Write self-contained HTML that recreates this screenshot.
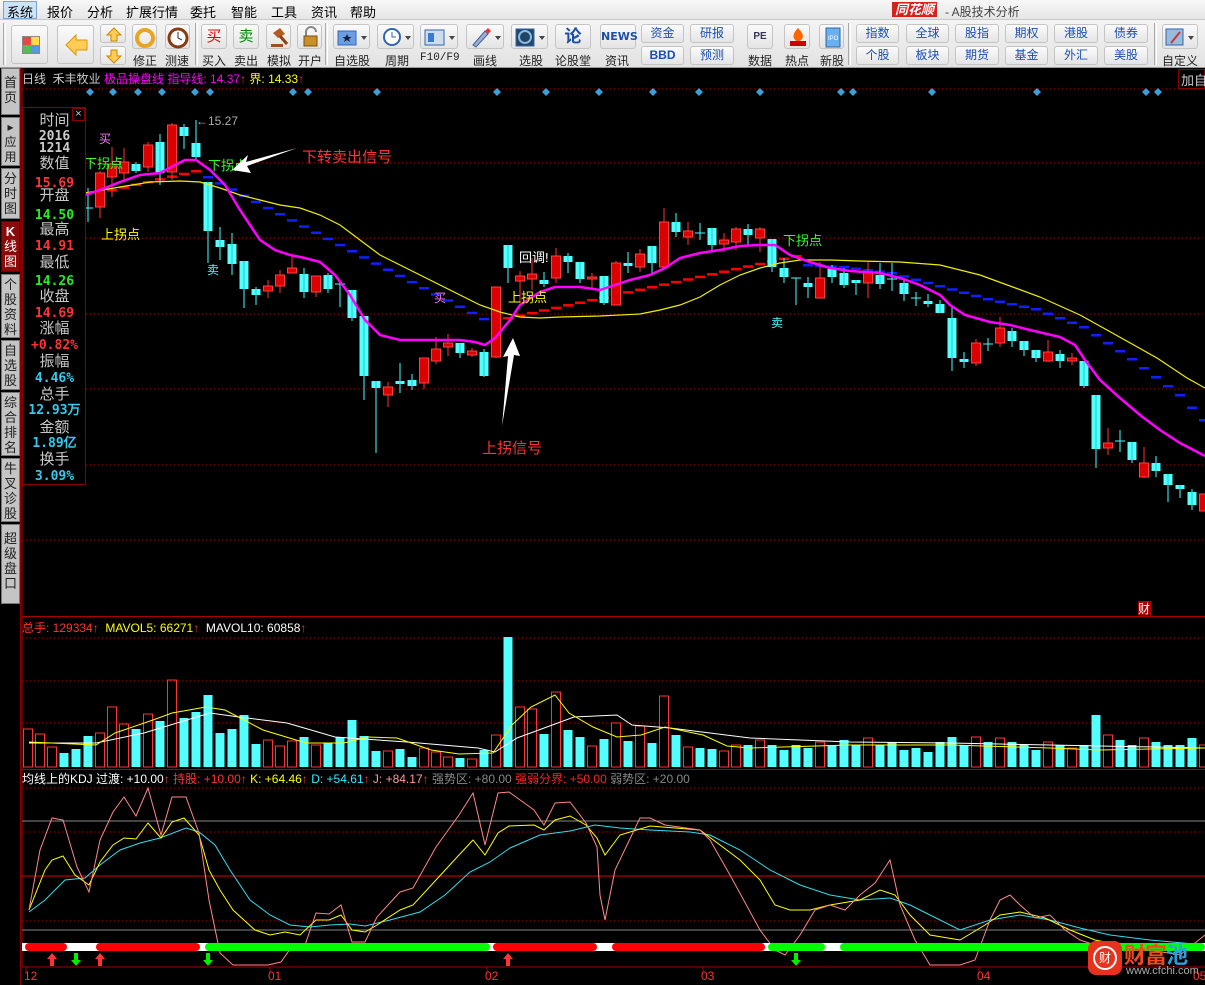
<!DOCTYPE html>
<html><head><meta charset="utf-8">
<style>
*{margin:0;padding:0;box-sizing:border-box}
body{width:1205px;height:985px;overflow:hidden;background:#000;font-family:"Liberation Sans","Noto Sans CJK SC",sans-serif;position:relative}
.a{position:absolute;white-space:nowrap}
#menu{position:absolute;left:0;top:0;width:1205px;height:20px;background:linear-gradient(#f7f7f7,#e6e6e6);border-bottom:1px solid #c8c8c8}
#menu span{position:absolute;top:2px;font-size:13px;color:#000}
#tb{position:absolute;left:0;top:20px;width:1205px;height:48px;background:linear-gradient(#f4f4f4,#e2e2e2);border-bottom:1px solid #999}
.btn{position:absolute;border:1px solid #c4c4c4;border-radius:3px;background:linear-gradient(#fbfbfb,#e4e4e4)}
.lbl{position:absolute;font-size:12px;color:#222;top:32px}
.sb{position:absolute;font-size:12px;color:#1a4fb0;text-align:center;line-height:17px}
.sep{position:absolute;top:3px;width:3px;height:42px;border-left:1px solid #aaa;border-right:1px solid #fff}
#side{position:absolute;left:0;top:68px;width:21px;height:917px;background:#000;border-right:1px solid #800}
.tab{position:absolute;left:1px;width:19px;background:#c4c4c4;border:1px solid #777;color:#222;font-size:13px;line-height:15px;text-align:center;padding-top:2px;overflow:hidden}
.ip{position:absolute;left:0;width:63px;text-align:center;font-size:15px;line-height:16px}
.lb{color:#c8c8c8}
.v{font-weight:bold;font-family:"DejaVu Sans Mono","Liberation Mono",monospace;font-size:13px}
</style></head><body>
<div id="menu">
<span style="left:3px;top:1px;background:#cfe3f7;border:1px solid #7da2ce;padding:0 3px;height:18px">系统</span>
<span style="left:47px">报价</span><span style="left:87px">分析</span><span style="left:126px">扩展行情</span><span style="left:190px">委托</span><span style="left:231px">智能</span><span style="left:271px">工具</span><span style="left:311px">资讯</span><span style="left:350px">帮助</span>
<span style="left:892px;top:2px;color:#fff;background:#d8201c;font-style:italic;font-weight:bold;font-size:13px;padding:0 3px;line-height:15px">同花顺</span>
<span style="left:945px;color:#444;font-size:12px;top:3px">- A股技术分析</span>
</div>
<div id="tb">
<div class="sep" style="left:3px"></div>
<div class="btn" style="left:11px;top:5px;width:37px;height:39px"><div style="position:absolute;left:10px;top:10px;width:18px;height:18px;display:grid;grid-template-columns:1fr 1fr;border:1px solid #888"><i style="background:#e44"></i><i style="background:#fd4"></i><i style="background:#5b5"></i><i style="background:#59d"></i></div></div>
<div class="btn" style="left:57px;top:5px;width:37px;height:39px"><svg width="37" height="39" style="position:absolute;left:0;top:0"><path d="M8 19 L18 9 L18 14 L29 14 L29 24 L18 24 L18 29 Z" fill="#fc5" stroke="#d90"/></svg></div>
<div class="btn" style="left:100px;top:4px;width:26px;height:19px"><svg width="26" height="19"><path d="M13 3 L20 10 L16 10 L16 16 L10 16 L10 10 L6 10Z" fill="#fc5" stroke="#c80"/></svg></div>
<div class="btn" style="left:100px;top:26px;width:26px;height:19px"><svg width="26" height="19"><path d="M13 16 L20 9 L16 9 L16 3 L10 3 L10 9 L6 9Z" fill="#fc5" stroke="#c80"/></svg></div>
<div class="btn" style="left:132px;top:4px;width:25px;height:25px"><svg width="25" height="25"><circle cx="12" cy="13" r="8" fill="none" stroke="#eaa520" stroke-width="4"/></svg></div><div class="lbl" style="left:133px">修正</div>
<div class="btn" style="left:165px;top:4px;width:25px;height:25px"><svg width="25" height="25"><circle cx="12" cy="13" r="9" fill="#fff" stroke="#8a3a10" stroke-width="3"/><path d="M12 7V13L16 15" stroke="#333" fill="none"/></svg></div><div class="lbl" style="left:165px">测速</div>
<div class="sep" style="left:195px"></div>
<div class="btn" style="left:201px;top:4px;width:26px;height:25px;color:#e00;font-size:15px;text-align:center;line-height:23px">买</div><div class="lbl" style="left:202px">买入</div>
<div class="btn" style="left:233px;top:4px;width:26px;height:25px;color:#080;font-size:15px;text-align:center;line-height:23px">卖</div><div class="lbl" style="left:234px">卖出</div>
<div class="btn" style="left:266px;top:4px;width:25px;height:25px"><svg width="25" height="25"><path d="M6 8 L13 3 L18 9 L11 13Z" fill="#b55a20"/><path d="M13 11 L20 19" stroke="#8a4010" stroke-width="3"/><rect x="4" y="19" width="12" height="3" fill="#a05020"/></svg></div><div class="lbl" style="left:267px">模拟</div>
<div class="btn" style="left:297px;top:4px;width:25px;height:25px"><svg width="25" height="25"><path d="M8 11 V7 a5 5 0 0 1 10 0" fill="none" stroke="#888" stroke-width="2"/><rect x="6" y="11" width="13" height="10" fill="#c8902a" stroke="#7a5010"/></svg></div><div class="lbl" style="left:298px">开户</div>
<div class="sep" style="left:325px"></div>
<div class="btn" style="left:333px;top:4px;width:37px;height:25px"><svg width="37" height="25"><rect x="4" y="6" width="18" height="14" fill="#6a9ee0" stroke="#36c"/><path d="M13 9 l1.5 3h3l-2.5 2 1 3-3-2-3 2 1-3-2.5-2h3z" fill="#124"/><path d="M27 11h6l-3 4z" fill="#444"/></svg></div><div class="lbl" style="left:334px">自选股</div>
<div class="btn" style="left:377px;top:4px;width:37px;height:25px"><svg width="37" height="25"><circle cx="14" cy="12" r="8" fill="#fff" stroke="#36a" stroke-width="2"/><path d="M14 7v5h4" stroke="#36a" fill="none"/><path d="M27 11h6l-3 4z" fill="#444"/></svg></div><div class="lbl" style="left:385px">周期</div>
<div class="btn" style="left:420px;top:4px;width:38px;height:25px"><svg width="38" height="25"><rect x="4" y="5" width="19" height="15" fill="#cde" stroke="#36a"/><rect x="7" y="8" width="6" height="9" fill="#3a7ad0"/><path d="M28 11h6l-3 4z" fill="#444"/></svg></div><div class="lbl" style="left:420px;font-family:'Liberation Mono',monospace;font-size:11px">F10/F9</div>
<div class="btn" style="left:466px;top:4px;width:38px;height:25px"><svg width="38" height="25"><path d="M6 20 L18 6 L21 9 L9 22Z" fill="#aac" stroke="#36a"/><path d="M18 6 L21 3 L24 6 L21 9" fill="#e33"/><path d="M28 11h6l-3 4z" fill="#444"/></svg></div><div class="lbl" style="left:473px">画线</div>
<div class="btn" style="left:511px;top:4px;width:37px;height:25px"><svg width="37" height="25"><rect x="4" y="4" width="18" height="17" fill="#246" stroke="#36a"/><circle cx="13" cy="12" r="6" fill="none" stroke="#8bd" stroke-width="2"/><path d="M27 11h6l-3 4z" fill="#444"/></svg></div><div class="lbl" style="left:519px">选股</div>
<div class="btn" style="left:555px;top:4px;width:36px;height:25px;color:#1d4fa8;font-weight:bold;font-size:17px;text-align:center;line-height:23px">论</div><div class="lbl" style="left:555px">论股堂</div>
<div class="btn" style="left:600px;top:4px;width:36px;height:25px;color:#1d4fa8;font-weight:bold;font-size:11px;text-align:center;line-height:23px;font-family:'DejaVu Sans',sans-serif">NEWS</div><div class="lbl" style="left:605px">资讯</div>
<div class="btn sb" style="left:641px;top:4px;width:43px;height:19px">资金</div>
<div class="btn sb" style="left:641px;top:26px;width:43px;height:19px;font-weight:bold">BBD</div>
<div class="btn sb" style="left:690px;top:4px;width:44px;height:19px">研报</div>
<div class="btn sb" style="left:690px;top:26px;width:44px;height:19px">预测</div>
<div class="btn" style="left:747px;top:4px;width:26px;height:25px;color:#335;font-size:10px;font-weight:bold;text-align:center;line-height:23px">PE</div><div class="lbl" style="left:748px">数据</div>
<div class="btn" style="left:784px;top:4px;width:26px;height:25px"><svg width="26" height="25"><path d="M13 3 C20 10 19 14 13 17 C7 14 7 9 13 3Z" fill="#f60"/><rect x="5" y="16" width="16" height="5" fill="#c00"/></svg></div><div class="lbl" style="left:785px">热点</div>
<div class="btn" style="left:819px;top:4px;width:25px;height:25px"><svg width="25" height="25"><rect x="6" y="3" width="14" height="19" fill="#6ab0ee" stroke="#36a"/><text x="8" y="15" font-size="6" fill="#fff" font-family="Liberation Sans">IPO</text></svg></div><div class="lbl" style="left:820px">新股</div>
<div class="sep" style="left:848px"></div>
<div class="btn sb" style="left:856px;top:4px;width:43px;height:19px">指数</div><div class="btn sb" style="left:856px;top:26px;width:43px;height:19px">个股</div>
<div class="btn sb" style="left:906px;top:4px;width:43px;height:19px">全球</div><div class="btn sb" style="left:906px;top:26px;width:43px;height:19px">板块</div>
<div class="btn sb" style="left:955px;top:4px;width:44px;height:19px">股指</div><div class="btn sb" style="left:955px;top:26px;width:44px;height:19px">期货</div>
<div class="btn sb" style="left:1005px;top:4px;width:43px;height:19px">期权</div><div class="btn sb" style="left:1005px;top:26px;width:43px;height:19px">基金</div>
<div class="btn sb" style="left:1054px;top:4px;width:44px;height:19px">港股</div><div class="btn sb" style="left:1054px;top:26px;width:44px;height:19px">外汇</div>
<div class="btn sb" style="left:1104px;top:4px;width:44px;height:19px">债券</div><div class="btn sb" style="left:1104px;top:26px;width:44px;height:19px">美股</div>
<div class="sep" style="left:1154px"></div>
<div class="btn" style="left:1162px;top:4px;width:36px;height:25px"><svg width="36" height="25"><rect x="3" y="4" width="17" height="16" fill="#9bd" stroke="#36a"/><path d="M8 18 L17 7" stroke="#c33" stroke-width="2"/><path d="M25 11h6l-3 4z" fill="#444"/></svg></div><div class="lbl" style="left:1162px">自定义</div>
</div>

<div id="side">
<div class="tab" style="top:0;height:47px;padding-top:6px">首<br>页</div>
<div class="tab" style="top:49px;height:49px;font-size:12px">▸<br>应<br>用</div>
<div class="tab" style="top:100px;height:51px">分<br>时<br>图</div>
<div class="tab" style="top:153px;height:51px;background:#8b0a0a;color:#fff;border-color:#600"><b>K</b><br>线<br>图</div>
<div class="tab" style="top:206px;height:64px">个<br>股<br>资<br>料</div>
<div class="tab" style="top:272px;height:50px">自<br>选<br>股</div>
<div class="tab" style="top:324px;height:64px">综<br>合<br>排<br>名</div>
<div class="tab" style="top:390px;height:64px">牛<br>叉<br>诊<br>股</div>
<div class="tab" style="top:456px;height:80px;padding-top:6px">超<br>级<br>盘<br>口</div>
</div>

<svg id="ch" width="1205" height="985" style="position:absolute;left:0;top:0" font-family="Liberation Sans, Noto Sans CJK SC, sans-serif"></svg>

<div class="a" style="left:22px;top:70px;font-size:12px;color:#ccc">日线 &nbsp;禾丰牧业 <span style="color:#f0f">极品操盘线 指导线</span><span style="color:#f0f">: 14.37</span><span style="color:#f33">↑</span> <span style="color:#ff0">界: 14.33</span><span style="color:#f33">↑</span></div>
<div class="a" style="left:1178px;top:69px;width:27px;height:20px;border:1px solid #800;color:#ccc;font-size:13px;padding-left:2px">加自</div>

<div class="a" style="left:22px;top:107px;width:64px;height:378px;border:1px solid #800;background:#000">
<div style="position:absolute;right:0;top:0;width:13px;height:13px;border:1px solid #800;color:#ccc;font-size:11px;line-height:11px;text-align:center">×</div>
<div class="ip lb" style="top:5px">时间</div>
<div class="ip v" style="top:21px;color:#ccc">2016</div>
<div class="ip v" style="top:33px;color:#ccc">1214</div>
<div class="ip lb" style="top:48px">数值</div>
<div class="ip v" style="top:68px;color:#f33">15.69</div>
<div class="ip lb" style="top:80px">开盘</div>
<div class="ip v" style="top:100px;color:#2e2">14.50</div>
<div class="ip lb" style="top:114px">最高</div>
<div class="ip v" style="top:131px;color:#f33">14.91</div>
<div class="ip lb" style="top:147px">最低</div>
<div class="ip v" style="top:166px;color:#2e2">14.26</div>
<div class="ip lb" style="top:181px">收盘</div>
<div class="ip v" style="top:198px;color:#f33">14.69</div>
<div class="ip lb" style="top:213px">涨幅</div>
<div class="ip v" style="top:230px;color:#f33">+0.82%</div>
<div class="ip lb" style="top:246px">振幅</div>
<div class="ip v" style="top:263px;color:#3ce">4.46%</div>
<div class="ip lb" style="top:279px">总手</div>
<div class="ip v" style="top:295px;color:#3ce">12.93万</div>
<div class="ip lb" style="top:312px">金额</div>
<div class="ip v" style="top:328px;color:#3ce">1.89亿</div>
<div class="ip lb" style="top:344px">换手</div>
<div class="ip v" style="top:361px;color:#3ce">3.09%</div>
</div>

<div class="a" style="left:22px;top:619px;font-size:12px"><span style="color:#f33">总手: 129334↑</span> &nbsp;<span style="color:#ff0">MAVOL5: 66271</span><span style="color:#f33">↑</span> &nbsp;<span style="color:#fff">MAVOL10: 60858</span><span style="color:#f33">↑</span></div>
<div class="a" style="left:22px;top:770px;font-size:12px"><span style="color:#fff">均线上的KDJ 过渡: +10.00</span><span style="color:#f33">↑</span> <span style="color:#f33">持股: +10.00↑</span> <span style="color:#ff0">K: +64.46</span><span style="color:#f33">↑</span> <span style="color:#3ef">D: +54.61</span><span style="color:#f33">↑</span> <span style="color:#f99">J: +84.17</span><span style="color:#f33">↑</span> <span style="color:#888">强势区: +80.00</span> <span style="color:#f22">强弱分界: +50.00</span> <span style="color:#888">弱势区: +20.00</span></div>

<div class="a" style="left:1088px;top:941px;width:34px;height:34px;border-radius:8px;background:#e8321e"><div style="position:absolute;left:5px;top:5px;width:24px;height:24px;border:2px solid #fff;border-radius:50%;color:#fff;font-size:12px;text-align:center;line-height:20px">财</div></div>
<div class="a" style="left:1124px;top:938px;font-size:22px;font-weight:bold;letter-spacing:-1px"><span style="color:#f04a1e">财富</span><span style="color:#2aa0e0">池</span></div>
<div class="a" style="left:1126px;top:965px;font-size:11px;color:#aaa">www.cfchi.com</div>

<script>
const S=document.getElementById('ch');let h='';
function L(x1,y1,x2,y2,c,w,d){h+=`<line x1="${x1}" y1="${y1}" x2="${x2}" y2="${y2}" stroke="${c}" stroke-width="${w||1}"${d?` stroke-dasharray="${d}"`:''}/>`;}
function P(pts,c,w){h+=`<polyline points="${pts.map(p=>p.join(',')).join(' ')}" fill="none" stroke="${c}" stroke-width="${w||1}"/>`;}
function T(x,y,t,c,s){h+=`<text x="${x}" y="${y}" fill="${c}" font-size="${s||13}">${t}</text>`;}
L(22,68,22,967,'#a00');
L(22,616.5,1205,616.5,'#a00');L(22,769.5,1205,769.5,'#a00');
[89,163,238,314,389,465,540].forEach(y=>L(22,y,1205,y,'#a00',1,'1 3'));
[638,681,723].forEach(y=>L(22,y,1205,y,'#a00',1,'1 3'));
[788,832,921].forEach(y=>L(22,y,1205,y,'#a00',1,'1 3'));
L(22,821,1205,821,'#888');L(22,930,1205,930,'#888');L(22,876,1205,876,'#d00');
L(22,967,1205,967,'#a00');
[90,113,138,162,195,210,293,308,377,497,546,599,653,699,760,841,853,932,1037,1146,1158].forEach(x=>h+=`<path d="M${x} 88l4 4-4 4-4-4z" fill="#3aa0d8"/>`);
const C=[[208,208,188,222],[207,173,171,218],[177,164,147,197],[173,162,148,183],[164,171,162,173],[167,145,142,172],[142,173,134,185],[172,125,123,180],[127,136,124,149],[143,157,120,160],[182,231,182,263],[240,247,227,260],[244,264,233,275],[261,289,261,308],[289,295,287,305],[291,286,280,298],[286,275,270,293],[273,268,254,273],[274,292,268,298],[292,276,276,297],[275,289,273,293],[284,284,283,307],[290,318,290,321],[316,376,316,400],[381,388,381,453],[395,387,382,407],[381,384,363,393],[380,386,374,390],[383,358,358,389],[361,349,337,364],[347,343,334,356],[343,353,343,358],[355,351,348,357],[352,376,349,377],[357,287,287,358],[245,268,245,283],[281,276,271,303],[279,274,258,290],[280,284,272,287],[278,256,248,283],[256,262,253,273],[262,279,262,283],[279,277,273,288],[276,303,276,305],[305,263,261,305],[263,266,252,273],[267,254,249,272],[246,263,246,273],[267,222,208,268],[222,232,213,237],[237,231,222,245],[233,233,223,240],[228,245,228,250],[244,240,233,252],[242,229,227,250],[229,235,224,245],[238,229,227,252],[239,267,239,272],[268,277,258,283],[278,278,278,305],[283,287,277,298],[298,278,262,298],[269,277,265,283],[273,285,268,288],[280,283,280,295],[283,272,262,298],[275,284,263,289],[279,279,263,291],[283,294,279,301],[298,298,292,306],[301,304,294,307],[304,313,300,313],[318,358,307,371],[359,362,352,368],[363,343,339,366],[344,344,338,351],[343,328,317,347],[331,341,328,347],[341,350,341,356],[350,358,350,362],[361,352,340,362],[354,361,350,368],[361,358,353,365],[361,386,361,388],[395,449,395,468],[448,443,428,455],[441,441,430,452],[442,460,442,463],[477,463,447,478],[463,471,456,477],[474,485,474,502],[485,489,485,498],[492,505,489,510],[511,494,494,511]];
const col=[];
function dash(i0,i1,y0,y1,c){for(let i=i0;i<=i1;i++){const x=28+12*i,y=y0+(y1-y0)*(i-i0)/(i1-i0);h+=`<rect x="${x-5}" y="${y-1}" width="10" height="2.5" fill="${c}"/>`;}}
dash(7,14,190,171,'#f00');dash(15,39,177,325,'#1020ff');dash(40,64,318,256,'#f00');
(function(){for(let i=65;i<=98;i++){let x=28+12*i;let xs=[808,844,892,940,988,1036,1084,1132,1180,1204],ys=[265,267,273,286,299,309,327,359,395,420];let y=ys[0];for(let k=0;k<xs.length-1;k++)if(x>=xs[k]&&x<=xs[k+1])y=ys[k]+(ys[k+1]-ys[k])*(x-xs[k])/(xs[k+1]-xs[k]);h+=`<rect x="${x-5}" y="${y-1}" width="10" height="2.5" fill="#1020ff"/>`;}})();
C.forEach((c,k)=>{const i=k+5,x=28+12*i;let [o,cl,hi,lo]=c;const isRed=cl<o;col[i]=isRed?'r':'c';const top=Math.min(o,cl),bot=Math.max(o,cl);
 if(isRed){L(x,hi,x,top,'#f33');L(x,bot,x,lo,'#f33');h+=`<rect x="${x-4.5}" y="${top}" width="9" height="${Math.max(bot-top,1)}" fill="#d00" stroke="#ff4040"/>`;}
 else{L(x,hi,x,lo,'#4ff');if(bot-top<1)L(x-5,top,x+5,top,'#4ff');else h+=`<rect x="${x-4.5}" y="${top}" width="9" height="${bot-top}" fill="#54ffff"/><line x1="${x}" y1="${top}" x2="${x}" y2="${bot}" stroke="#1cc" />`;}
});
P([[85,193],[120,187],[150,182],[180,181],[200,182],[220,188],[240,195],[260,200],[280,205],[300,208],[320,215],[340,225],[360,240],[380,255],[400,265],[420,275],[440,285],[460,295],[480,305],[500,312],[520,317],[540,318],[560,317],[600,316],[640,314],[660,310],[680,305],[700,297],[720,285],[740,275],[760,268],[780,263],[800,260],[830,260],[860,261],[900,262],[940,265],[980,275],[1040,297],[1080,315],[1107,330],[1157,358],[1187,378],[1205,388]],'#ee0',1.2);
P([[85,195],[100,190],[120,182],[140,175],[160,173],[175,165],[185,160],[196,160],[210,170],[225,185],[240,210],[260,240],[275,250],[290,255],[305,258],[320,262],[335,275],[350,295],[365,320],[380,335],[400,340],[420,340],[440,340],[460,340],[475,342],[485,345],[495,338],[510,320],[520,305],[540,292],[555,287],[580,287],[600,290],[615,285],[630,280],[650,275],[665,268],[680,258],[700,253],[720,250],[740,246],[760,245],[775,245],[790,255],[810,262],[830,268],[850,271],[880,273],[900,278],[920,285],[940,295],[950,305],[965,315],[990,322],[1010,325],[1030,330],[1060,337],[1075,345],[1085,360],[1100,380],[1120,398],[1140,415],[1160,430],[1180,443],[1205,456]],'#f0f',2.5);
T(99,143,'买','#f7f',12);T(84,168,'下拐点','#3f3',13);T(101,239,'上拐点','#ff0',13);
T(196,125,'←15.27','#aaa',12);T(208,170,'下拐点','#3f3',13);T(207,274,'卖','#4ff',12);
T(302,162,'下转卖出信号','#f33',15);T(434,302,'买','#f7f',12);T(519,262,'回调!','#fff',13);
T(508,302,'上拐点','#ff0',13);T(783,245,'下拐点','#3f3',13);T(771,327,'卖','#4ff',12);T(482,453,'上拐信号','#f33',15);
h+=`<path d="M297 148 L246 162 L248 155 L232 170 L251 173 L247 166 Z" fill="#fff"/>`;
h+=`<path d="M502 426 L508 356 L503 357 L513 338 L520 356 L514 355 Z" fill="#fff"/>`;
h+=`<rect x="1138" y="601" width="13" height="14" fill="#a00"/>`;T(1138,613,'财','#fff',12);
const vt=[729,734,747,753,749,736,733,707,724,729,714,721,680,718,712,695,733,729,715,744,740,746,741,737,745,743,737,720,736,751,751,749,757,748,752,757,758,759,750,735,637,707,709,734,692,730,737,746,739,723,741,726,743,696,735,747,748,749,751,745,745,740,745,750,745,748,742,745,740,745,738,745,742,750,748,752,742,737,745,737,742,738,742,745,750,742,745,748,745,715,735,740,745,738,742,745,745,738,745];
const c0=['r','r','r','c','c'];
vt.forEach((t,i)=>{const x=28+12*i;const c=i<5?c0[i]:col[i];if(c=='r')h+=`<rect x="${x-4.5}" y="${t}" width="9" height="${767-t}" fill="none" stroke="#f33"/>`;else h+=`<rect x="${x-4.5}" y="${t}" width="9" height="${767-t}" fill="#54ffff"/>`;});
P([[29,743],[96,743],[144,733],[210,713],[239,717],[287,723],[335,737],[407,742],[478,748],[495,752],[517,738],[574,717],[617,715],[632,725],[670,728],[750,738],[850,742],[950,743],[1050,745],[1205,748]],'#fff');
P([[29,742],[96,745],[115,733],[153,720],[172,713],[206,707],[225,710],[263,730],[306,743],[344,743],[368,737],[397,738],[431,750],[459,754],[493,753],[512,725],[531,707],[555,695],[569,713],[593,727],[617,737],[641,735],[665,727],[703,735],[727,746],[750,748],[850,745],[950,745],[1050,748],[1100,750],[1205,748]],'#ff0');
P([[29,912],[45,900],[65,880],[85,878],[100,865],[120,850],[140,843],[160,838],[186,828],[199,832],[215,845],[230,870],[250,900],[270,915],[290,925],[310,927],[330,925],[350,924],[365,926],[390,920],[420,912],[445,895],[470,872],[490,862],[510,848],[540,835],[570,831],[595,825],[620,828],[650,830],[690,832],[710,835],[740,850],[770,870],[800,885],[830,895],[860,900],[890,898],[910,905],[930,915],[960,930],[990,920],[1020,915],[1050,920],[1080,928],[1110,935],[1150,940],[1205,945]],'#3de');
P([[29,910],[45,870],[52,860],[63,856],[75,875],[89,885],[100,862],[113,845],[124,838],[136,839],[148,823],[161,838],[172,822],[184,818],[199,835],[209,870],[220,890],[233,910],[255,930],[270,935],[285,932],[300,935],[316,920],[329,920],[341,915],[352,930],[365,932],[377,925],[400,910],[413,905],[436,880],[459,855],[473,840],[485,855],[498,833],[509,826],[534,825],[544,830],[555,820],[570,816],[586,825],[597,838],[605,855],[620,835],[650,826],[700,830],[740,860],[760,880],[775,905],[790,910],[810,910],[830,905],[860,900],[880,890],[895,895],[910,915],[930,935],[960,940],[985,925],[1000,915],[1020,912],[1045,918],[1070,930],[1095,940],[1120,945],[1150,945],[1180,948],[1205,945]],'#ff0');
P([[29,910],[40,850],[52,818],[63,820],[77,867],[89,892],[100,840],[113,812],[124,797],[136,816],[148,788],[161,835],[172,797],[186,797],[199,833],[209,900],[220,953],[233,965],[268,965],[281,962],[293,945],[304,948],[316,913],[329,914],[341,905],[352,942],[365,942],[377,917],[400,892],[413,888],[436,847],[459,815],[473,793],[485,845],[498,793],[509,792],[534,810],[544,825],[555,803],[570,802],[586,823],[597,847],[600,895],[605,920],[615,870],[640,818],[650,818],[665,825],[700,830],[710,840],[730,875],[760,930],[775,950],[785,955],[800,935],[815,910],[830,905],[845,910],[860,895],[875,883],[890,860],[900,905],[915,940],[930,965],[960,965],[975,960],[990,920],[1000,900],[1010,895],[1020,905],[1035,918],[1050,915],[1065,930],[1080,940],[1095,945],[1120,945],[1150,950],[1180,955],[1205,935]],'#f88');
h+=`<rect x="22" y="943" width="1183" height="8" fill="#fff"/>`;
[[25,67,'#f00'],[96,200,'#f00'],[205,490,'#0f0'],[493,597,'#f00'],[612,765,'#f00'],[768,825,'#0f0'],[840,1205,'#0f0']].forEach(s=>h+=`<rect x="${s[0]}" y="943" width="${s[1]-s[0]}" height="8" rx="4" fill="${s[2]}"/>`);
[52,100,508].forEach(x=>h+=`<path d="M${x} 953 l-5 6h3v7h4v-7h3z" fill="#f33"/>`);
[76,208,796].forEach(x=>h+=`<path d="M${x} 966 l-5 -6h3v-7h4v7h3z" fill="#0e0"/>`);
[[24,'12'],[268,'01'],[485,'02'],[701,'03'],[977,'04'],[1193,'05']].forEach(a=>{L(a[0]+2,967,a[0]+2,972,'#a00');T(a[0],980,a[1],'#f33',12);});
S.innerHTML=h;
</script>
</body></html>
